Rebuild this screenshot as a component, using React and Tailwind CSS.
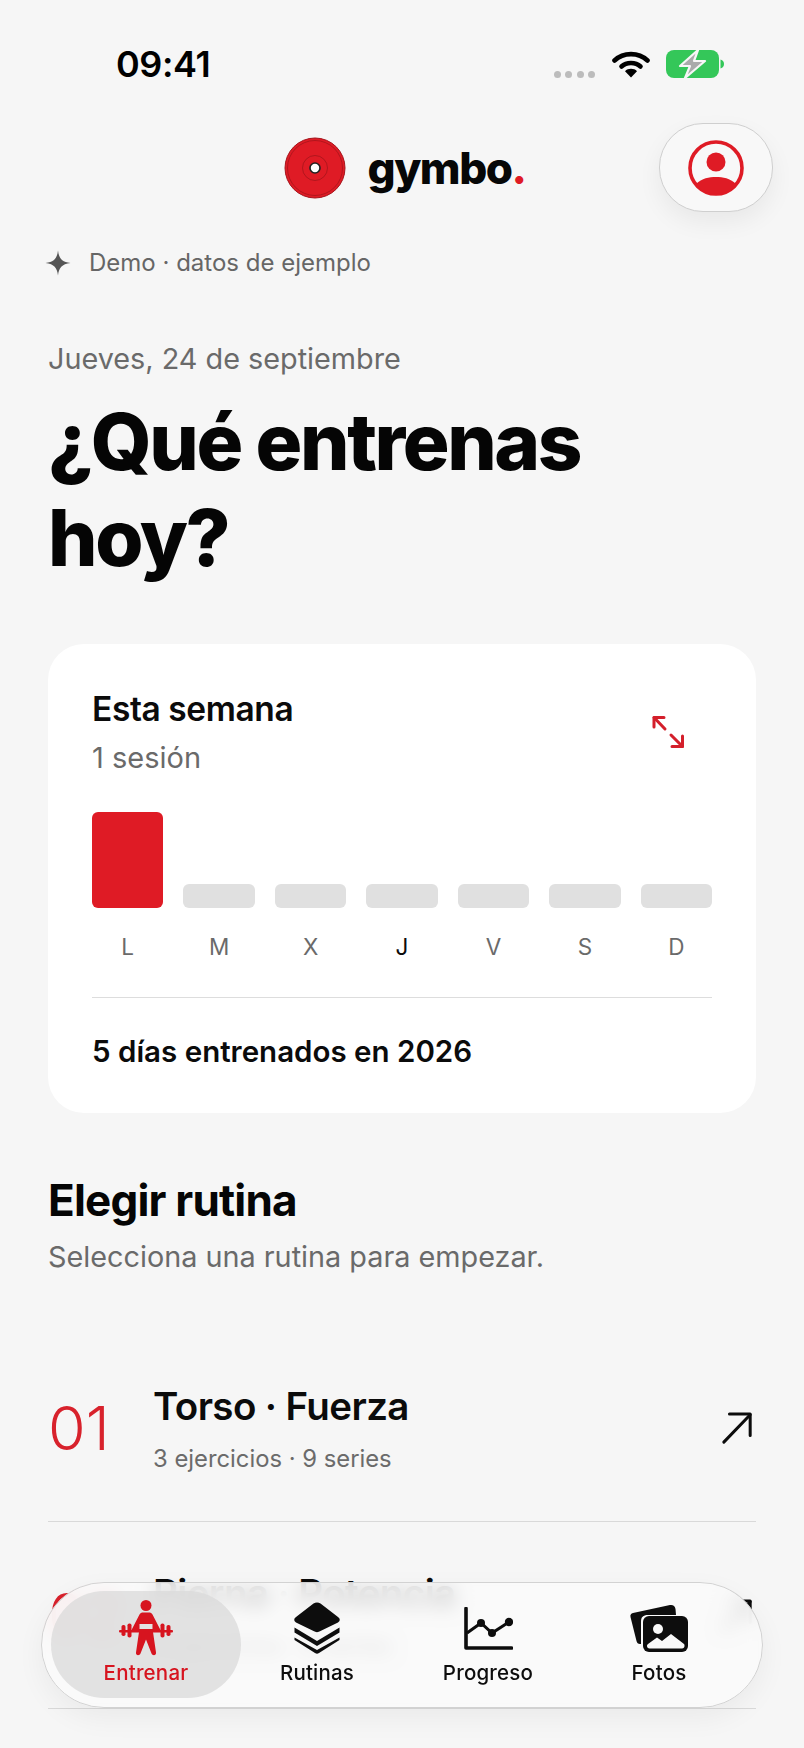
import React from "react";

const RED = "#df1b25";

function Wifi() {
  return (
    <svg width="38" height="28" viewBox="0 0 38 28" fill="none">
      <path d="M2.5 10.5C11.5 2 26.5 2 35.5 10.5" stroke="#000" strokeWidth="4.6" strokeLinecap="round" />
      <path d="M9.5 16.5C14.5 11.8 23.5 11.8 28.5 16.5" stroke="#000" strokeWidth="4.6" strokeLinecap="round" />
      <path d="M13 21.2C16 18 22 18 25 21.2L19 27.6Z" fill="#000" strokeLinejoin="round" />
    </svg>
  );
}

function Battery() {
  return (
    <svg width="58" height="28" viewBox="0 0 58 28">
      <rect x="0" y="0" width="53" height="28" rx="8" fill="#34c759" />
      <path d="M54.5 9.5C57 10 58 12 58 14C58 16 57 18 54.5 18.500Z" fill="#34c759" />
      <path d="M32 0L14 16H24L19 28L39 11H28Z" fill="#a9aaaa" stroke="#f6f6f6" strokeWidth="2.2" strokeLinejoin="round" />
    </svg>
  );
}

function Logo() {
  return (
    <svg width="62" height="62" viewBox="0 0 62 62">
      <circle cx="31" cy="31" r="30" fill={RED} stroke="#a5141b" strokeWidth="1" />
      <circle cx="31" cy="31" r="27.500" fill="none" stroke="#a5141b" strokeWidth="0.8" />
      <circle cx="31" cy="31" r="12.500" fill="none" stroke="#a5141b" strokeWidth="0.8" />
      <circle cx="31" cy="31" r="5" fill="#fff" stroke="#222" strokeWidth="1.6" />
    </svg>
  );
}

function Profile() {
  return (
    <svg width="56" height="56" viewBox="0 0 56 56">
      <defs>
        <clipPath id="pc"><circle cx="28" cy="28" r="26" /></clipPath>
      </defs>
      <circle cx="28" cy="28" r="26" fill="#f8f8f8" stroke={RED} strokeWidth="3.600" />
      <circle cx="28" cy="22" r="9.500" fill={RED} />
      <path d="M8 44C14 38 21 37 28 37C35 37 42 38 48 44V56H8Z" fill={RED} clipPath="url(#pc)" />
    </svg>
  );
}

function Expand() {
  return (
    <svg width="34" height="34" viewBox="0 0 34 34" fill="none" stroke="#d41f2b" strokeWidth="3" strokeLinecap="round" strokeLinejoin="round">
      <path d="M3 12V2.500H13" />
      <path d="M3 2.500L14 14" />
      <path d="M20 20L31.500 31.500" />
      <path d="M31.500 21V31.500H21" />
    </svg>
  );
}

function Arrow({ className }) {
  return (
    <svg className={className} width="32" height="34" viewBox="0 0 34 36" fill="none" stroke="#0c0c0c" strokeWidth="3.200" strokeLinecap="round" strokeLinejoin="round">
      <path d="M3 33L31 4" />
      <path d="M9 3H31V26" />
    </svg>
  );
}

function Lifter() {
  return (
    <svg width="54" height="56" viewBox="0 0 54 56" fill="#d7141f">
      <circle cx="27" cy="5.500" r="5.500" />
      <path fillRule="evenodd" d="M24 12.500H30C31.500 12.500 32.500 13 33.500 14.500L41.500 30H12.500L20.500 14.500C21.500 13 22.500 12.500 24 12.500ZM20.500 24V29H33.500V24Z" />
      <rect x="0" y="30" width="54" height="2.600" rx="1" />
      <rect x="2.500" y="25" width="4" height="11" rx="1.800" />
      <rect x="8.500" y="23.500" width="4" height="14" rx="1.800" />
      <rect x="47.500" y="25" width="4" height="11" rx="1.800" />
      <rect x="41.500" y="23.500" width="4" height="14" rx="1.800" />
      <path d="M20 32H34L37 52.500C37.400 55.800 33.500 56 32.500 53.500L27 39.500L21.500 53.500C20.500 56 16.600 55.800 17 52.500Z" />
    </svg>
  );
}

function Layers() {
  return (
    <svg width="46" height="52" viewBox="0 0 46 52" fill="#0d0d0d">
      <path d="M19.500 1.500C21.500 0 24.500 0 26.500 1.500L44 15C46.300 16.800 46.300 18.700 44 20.500L26.500 29C24.500 30.500 21.500 30.500 19.500 29L2 20.500C-0.300 18.700 -0.300 16.800 2 15Z" />
      <path d="M0.500 25.500L23 39L45.500 25.500V30.500L23 44L0.500 30.500Z" />
      <path d="M0.500 35.500L23 48L45.500 35.500V38L25 51C23.500 52 22.500 52 21 51L0.500 38Z" />
    </svg>
  );
}

function Chart() {
  return (
    <svg width="49" height="43" viewBox="0 0 49 43" fill="none" stroke="#0d0d0d">
      <path d="M2 1.500V41H47.500" strokeWidth="3.600" strokeLinecap="round" strokeLinejoin="round" />
      <path d="M3 26L17 16L28 26L45 15" strokeWidth="3" />
      <circle cx="17" cy="16" r="4" fill="#0d0d0d" stroke="none" />
      <circle cx="28" cy="26" r="4" fill="#0d0d0d" stroke="none" />
      <circle cx="45" cy="15" r="4.200" fill="#0d0d0d" stroke="none" />
    </svg>
  );
}

function Photos() {
  return (
    <svg width="58" height="48" viewBox="0 0 58 48">
      <path d="M3 9L40 1C43 0.500 45 2 45.500 5L46 11H18C13 11 11 13 11 18V40H10C8 40 7 39 6.500 37L0.500 13C0 11 1 9.500 3 9Z" fill="#0d0d0d" />
      <rect x="13" y="12" width="45" height="36" rx="6" fill="#0d0d0d" />
      <circle cx="28" cy="25" r="5" fill="#f8f8f8" />
      <path d="M17 42C17 41 17.500 40.500 18 40L27 33.500L32 37L41 30L54 40C54.500 40.500 54.500 41 54.500 42C54.500 43.500 53.500 44.500 52 44.500H19.500C18 44.500 17 43.500 17 42Z" fill="#f8f8f8" />
    </svg>
  );
}

function Sparkle() {
  return (
    <svg width="26" height="26" viewBox="0 0 24 24" fill="#555555">
      <path d="M12 0.500C12.800 7.500 15.500 11 23.500 12C15.500 13 12.800 16.500 12 23.500C11.200 16.500 8.500 13 0.500 12C8.500 11 11.200 7.500 12 0.500Z" />
    </svg>
  );
}

const days = ["L", "M", "X", "J", "V", "S", "D"];

function Row({ n, title, sub }) {
  return (
    <div className="flex h-[187px] items-center border-b border-[#d9d9d9]">
      <div className="w-[105px] text-[61px] leading-[60px] font-light text-[#d8222c]">{n}</div>
      <div className="-mt-[1px] flex-1">
        <div className="text-[38.500px] leading-[50px] font-semibold tracking-[-0.6px] text-[#0b0b0b]">{title}</div>
        <div className="mt-[13px] text-[23.800px] leading-[30px] text-[#6b6b6b]">{sub}</div>
      </div>
      <Arrow className="mr-[3px]" />
    </div>
  );
}

function NavItem({ label, active, children, center }) {
  return (
    <div className="absolute top-[15px] flex w-[140px] -translate-x-1/2 flex-col items-center" style={{ left: center }}>
      <div className="flex h-[60px] items-center justify-center">{children}</div>
      <div className={"mt-[2px] text-[20.500px] leading-[26px] font-medium tracking-[0.2px] " + (active ? "text-[#d7141f]" : "text-[#0d0d0d]")}>{label}</div>
    </div>
  );
}

export default function App() {
  return (
    <div className="relative h-[1748px] w-[804px] overflow-hidden bg-[#f6f6f6] font-['Inter',sans-serif] text-black">
      <div className="flex h-[84px] items-end justify-between pr-[80px] pl-[116px]">
        <div className="text-[36px] leading-[40px] font-semibold tracking-[-0.4px]">09:41</div>
        <div className="mb-[6px] flex items-center">
          <div className="mt-[22px] mr-[17px] flex gap-[4.500px]">
            <span className="h-[7px] w-[7px] rounded-full bg-[#bcbcbc]" />
            <span className="h-[7px] w-[7px] rounded-full bg-[#bcbcbc]" />
            <span className="h-[7px] w-[7px] rounded-full bg-[#bcbcbc]" />
            <span className="h-[7px] w-[7px] rounded-full bg-[#bcbcbc]" />
          </div>
          <Wifi />
          <div className="ml-[16px]"><Battery /></div>
        </div>
      </div>

      <div className="mt-[39px] grid h-[89px] grid-cols-[1fr_auto_1fr] items-center pr-[31px] pl-[36px]">
        <div />
        <div className="flex items-center gap-[22px]">
          <Logo />
          <div className="text-[44px] leading-[50px] font-extrabold tracking-[-1.500px] text-[#070707]">gymbo<span className="text-[#df1b25]">.</span></div>
        </div>
        <div className="flex justify-end">
          <div className="flex h-[89px] w-[114px] items-center justify-center rounded-[44px] border border-[#cfcfcf] bg-[#f8f8f8] shadow-[0_10px_24px_rgba(0,0,0,0.06)]">
            <Profile />
          </div>
        </div>
      </div>

      <div className="px-[48px]">
        <div className="mt-[35px] -ml-[3px] flex h-[32px] items-center gap-[18px]">
          <Sparkle />
          <span className="text-[24px] leading-[32px] text-[#666666]">Demo · datos de ejemplo</span>
        </div>

        <div className="mt-[60px] text-[28.800px] leading-[40px] text-[#6a6a6a]">Jueves, 24 de septiembre</div>
        <h1 className="mt-[15px] text-[78px] leading-[96px] font-extrabold tracking-[-2.400px] text-[#050505]">
          ¿Qué entrenas<br />hoy?
        </h1>

        <section className="mt-[58px] rounded-[36px] bg-white px-[44px] pt-[45px] pb-[44px]">
          <div className="flex justify-between">
            <div>
              <div className="text-[33.500px] leading-[40px] font-semibold tracking-[-0.4px] text-[#0b0b0b]">Esta semana</div>
              <div className="mt-[9px] text-[29px] leading-[40px] text-[#6a6a6a]">1 sesión</div>
            </div>
            <div className="mt-[26px] mr-[27px]"><Expand /></div>
          </div>
          <div className="mt-[34px] grid grid-cols-7 gap-[20px]">
            {days.map((d, i) => (
              <div key={d} className="flex h-[96px] items-end">
                <div className={i === 0 ? "h-[96px] w-full rounded-[6px] bg-[#df1b25]" : "h-[24px] w-full rounded-[6px] bg-[#e0e0e0]"} />
              </div>
            ))}
          </div>
          <div className="mt-[24px] grid grid-cols-7 gap-[20px]">
            {days.map((d) => (
              <div key={d} className={"text-center text-[22.500px] leading-[30px] " + (d === "J" ? "text-[#0b0b0b]" : "text-[#6a6a6a]")}>{d}</div>
            ))}
          </div>
          <div className="mt-[35px] h-px bg-[#dddddd]" />
          <div className="mt-[35px] text-[29.500px] leading-[36px] font-semibold text-[#0b0b0b]">5 días entrenados en 2026</div>
        </section>

        <h2 className="mt-[61px] text-[44px] leading-[52px] font-bold tracking-[-0.8px] text-[#050505]">Elegir rutina</h2>
        <p className="mt-[11px] text-[28.800px] leading-[40px] text-[#6a6a6a]">Selecciona una rutina para empezar.</p>

        <div className="mt-[58px]">
          <Row n="01" title="Torso · Fuerza" sub="3 ejercicios · 9 series" />
          <Row n="02" title="Pierna · Potencia" sub="3 ejercicios · 9 series" />
        </div>
      </div>

      <nav className="absolute top-[1582px] left-[41px] h-[126px] w-[722px] rounded-[63px] border border-[#d2d2d2] bg-[rgba(250,250,250,0.82)] shadow-[0_10px_28px_rgba(0,0,0,0.05)] backdrop-blur-[9px]">
        <div className="absolute top-[8px] left-[9px] h-[107px] w-[190px] rounded-[54px] bg-[#d9d9d9]/75" />
        <NavItem label="Entrenar" active center="104px"><Lifter /></NavItem>
        <NavItem label="Rutinas" center="275px"><Layers /></NavItem>
        <NavItem label="Progreso" center="446px"><Chart /></NavItem>
        <NavItem label="Fotos" center="617px"><Photos /></NavItem>
      </nav>
    </div>
  );
}
